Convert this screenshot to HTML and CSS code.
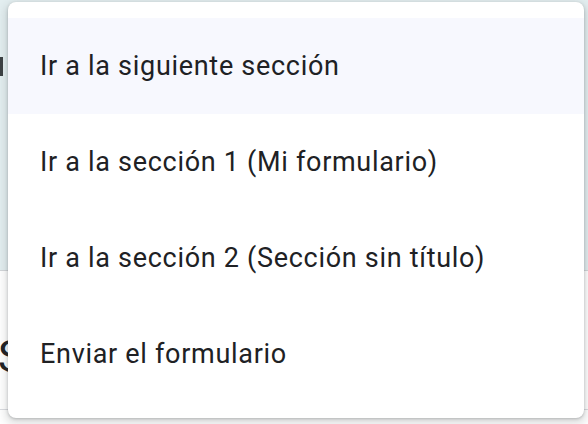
FILE: index.html
```html
<!DOCTYPE html>
<html lang="es">
<head>
  <meta charset="UTF-8">
  <meta name="viewport" content="width=device-width, initial-scale=1.0">
  <title>Menú de sección</title>
  <link rel="stylesheet" href="styles.css">
</head>
<body>
  <div class="page">
    <div class="panel">
      <span class="caret"></span>
    </div>
    <div class="section">
      <h2 class="section-title">Sección sin título</h2>
    </div>
  </div>

  <ul class="menu" role="listbox">
    <li class="menu-item active">Ir a la siguiente sección</li>
    <li class="menu-item">Ir a la sección 1 (Mi formulario)</li>
    <li class="menu-item">Ir a la sección 2 (Sección sin título)</li>
    <li class="menu-item">Enviar el formulario</li>
  </ul>
</body>
</html>
```

FILE: styles.css
```css
body {
  margin: 0;
  font-family: Roboto, Arial, sans-serif;
  background-color: #fff;
  color: #202124;
  overflow: hidden;
}
.page {
  height: 424px;
}
.panel {
  height: 271px;
  background-color: #e3eef0;
  border-bottom: 1px solid #d3d6d9;
  padding-top: 57px;
  box-sizing: border-box;
}
.caret {
  display: block;
  width: 3px;
  height: 19px;
  background-color: #3c4043;
}
.section {
  height: 138px;
  border-bottom: 1px solid #dadce0;
  overflow: hidden;
}
.section-title {
  margin: 60px 0 0 -2px;
  font-size: 44px;
  font-weight: 400;
  white-space: nowrap;
  color: #202124;
}
.menu {
  position: absolute;
  top: 2px;
  left: 8px;
  width: 576px;
  margin: 0;
  padding: 16px 0;
  list-style: none;
  background-color: #fff;
  border-radius: 8px;
  box-shadow: 0 1px 3px rgba(60, 64, 67, 0.3), 0 4px 8px 3px rgba(60, 64, 67, 0.15);
}
.menu-item {
  height: 96px;
  display: flex;
  align-items: center;
  padding-left: 32px;
  font-size: 27px;
  letter-spacing: 0.7px;
  color: #202124;
}
.menu-item.active {
  background-color: #f7f8fe;
}
```
